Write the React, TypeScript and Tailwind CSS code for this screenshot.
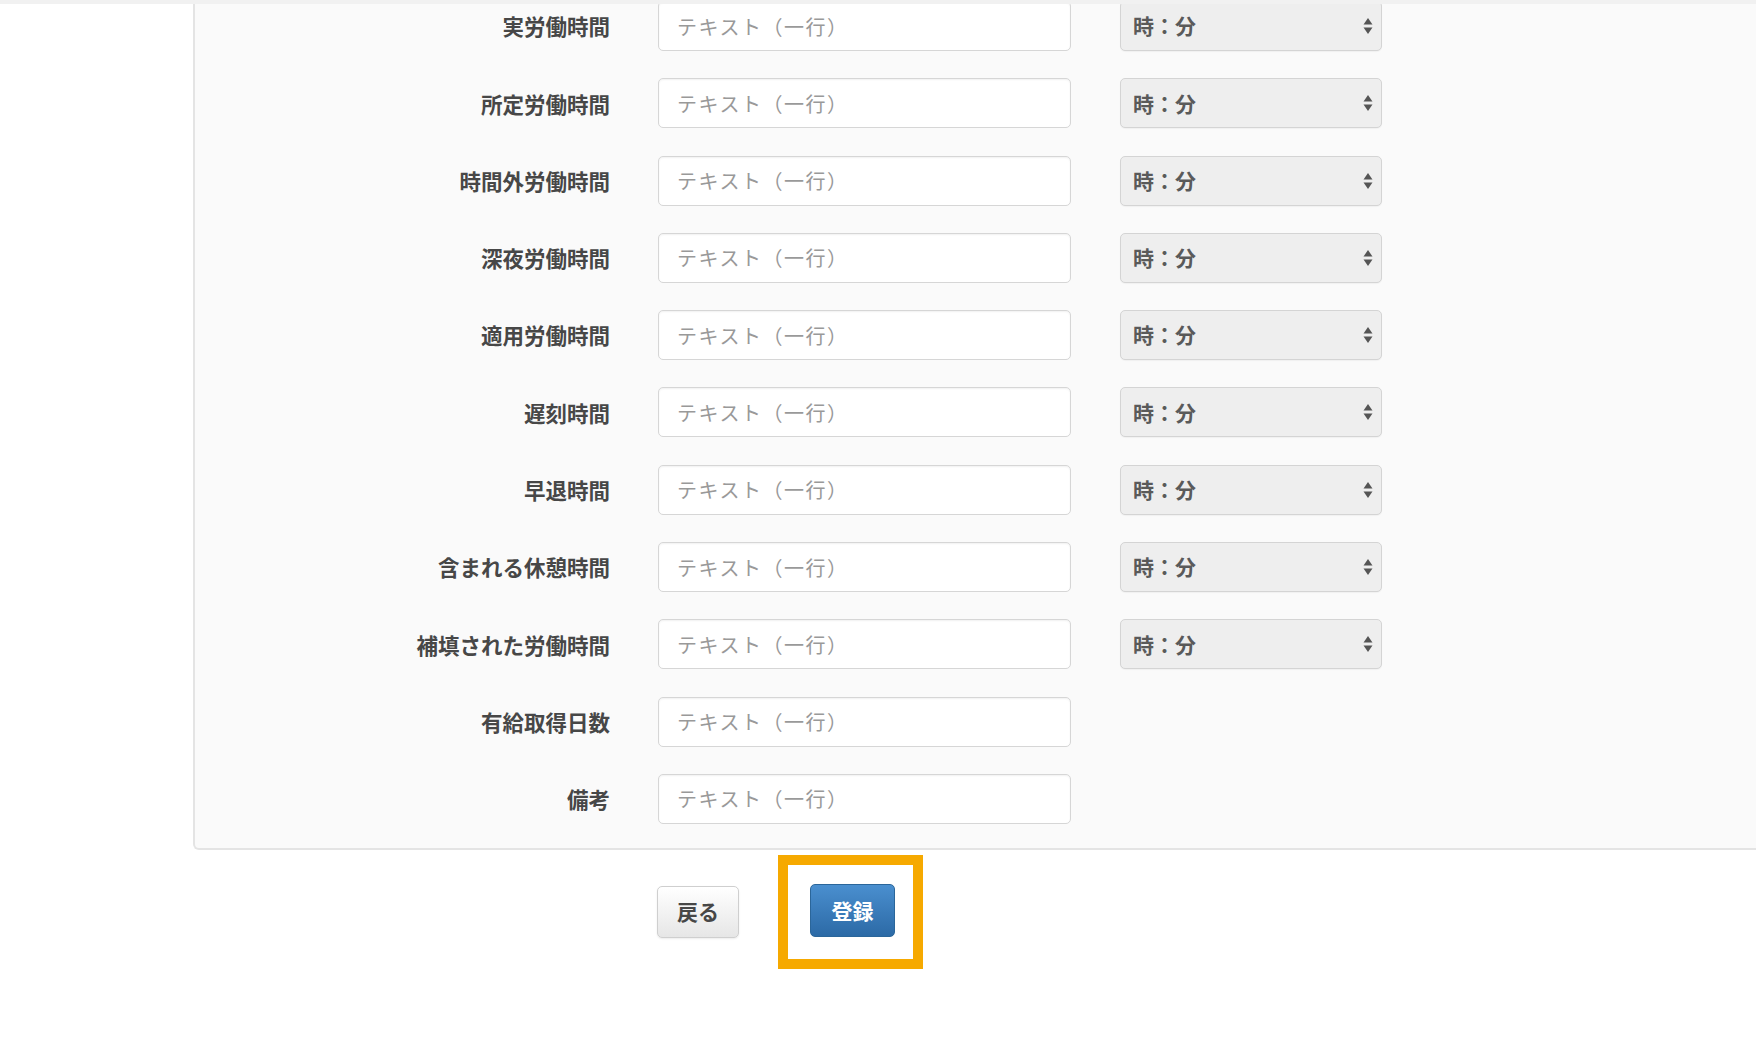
import React from 'react';

const rows: { label: string; time: boolean }[] = [
  { label: '実労働時間', time: true },
  { label: '所定労働時間', time: true },
  { label: '時間外労働時間', time: true },
  { label: '深夜労働時間', time: true },
  { label: '適用労働時間', time: true },
  { label: '遅刻時間', time: true },
  { label: '早退時間', time: true },
  { label: '含まれる休憩時間', time: true },
  { label: '補填された労働時間', time: true },
  { label: '有給取得日数', time: false },
  { label: '備考', time: false },
];

function SortArrows() {
  return (
    <svg width="10" height="18" viewBox="0 0 10 18" className="text-[#555]">
      <path d="M5 1 L9.5 7.5 H0.5 Z" fill="currentColor" />
      <path d="M5 17 L9.5 10.5 H0.5 Z" fill="currentColor" />
    </svg>
  );
}

export default function App() {
  return (
    <div
      className="relative min-h-[1046px] w-full overflow-hidden bg-white"
      style={{ fontFamily: '"Noto Sans CJK JP", "Noto Sans", sans-serif' }}
    >
      {/* header shadow */}
      <div className="absolute left-0 right-0 top-0 h-[4px] bg-[#f1f1f1]" />

      <div className="ml-[193px]">
        <div className="flex flex-col gap-[27.3px] rounded-bl-[6px] border-b-2 border-l-2 border-[#e4e4e4] bg-[#fafafa] pb-[24px] pt-px">
          {rows.map((r) => (
            <div key={r.label} className="flex items-center">
              <label className="w-[415px] text-right text-[21.5px] font-bold leading-none text-[#474747]">
                {r.label}
              </label>
              <input
                type="text"
                placeholder="テキスト（一行）"
                className="ml-[48px] h-[50px] w-[413px] rounded-[5px] border border-[#d6d6d6] bg-white px-[18px] text-[20px] tracking-[1.5px] text-[#333] shadow-[inset_0_1px_2px_rgba(0,0,0,0.06)] outline-none placeholder:text-[#999]"
              />
              {r.time && (
                <div className="ml-[49px] flex h-[50px] w-[262px] items-center justify-between rounded-[5px] border border-[#d4d4d4] bg-[#eeeeee] pl-[12px] pr-[8px] shadow-[0_1px_1px_rgba(0,0,0,0.04)]">
                  <span className="text-[21px] font-semibold text-[#5a5a5a]">時：分</span>
                  <SortArrows />
                </div>
              )}
            </div>
          ))}
        </div>

        <div className="mt-[5px] flex items-center">
          <button className="ml-[464px] h-[52px] w-[82px] rounded-[5px] border border-[#cfcfcf] bg-gradient-to-b from-white to-[#e6e6e6] text-[21px] font-bold text-[#474747] shadow-[0_1px_2px_rgba(0,0,0,0.08)]">
            戻る
          </button>
          <div className="ml-[39px] border-[10px] border-[#f6a900] bg-white pb-[22px] pl-[22px] pr-[18px] pt-[19px]">
            <button className="block h-[53px] w-[85px] rounded-[5px] border border-[#2b669a] bg-gradient-to-b from-[#4a8fcf] to-[#2c6aa6] text-[21px] font-bold text-white">
              登録
            </button>
          </div>
        </div>
      </div>
    </div>
  );
}
